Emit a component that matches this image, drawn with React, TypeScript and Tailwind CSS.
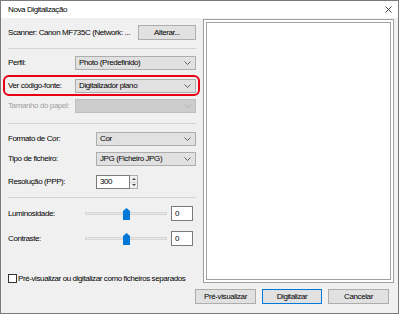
import React from 'react';

const font = "font-['Liberation_Sans',Arial,sans-serif] tracking-[-0.4px]";

const Chevron: React.FC<{ disabled?: boolean }> = ({ disabled }) => (
  <svg width="7" height="4" viewBox="0 0 7 4" className="shrink-0">
    <path d="M0.5 0.5 L3.5 3.5 L6.5 0.5" fill="none" stroke={disabled ? '#b5b5b5' : '#606060'} strokeWidth="1" />
  </svg>
);

const Select: React.FC<{ value?: string; disabled?: boolean; className?: string }> = ({ value, disabled, className }) => (
  <div
    className={`h-[14px] shrink-0 flex items-center justify-between pl-[3px] pr-[4px] border ${
      disabled ? 'bg-[#cccccc] border-[#bfbfbf]' : 'bg-[#e1e1e1] border-[#adadad]'
    } ${className ?? ''}`}
  >
    <span className="text-[8px] leading-none text-black">{value}</span>
    <Chevron disabled={disabled} />
  </div>
);

const Label: React.FC<{ children: React.ReactNode; disabled?: boolean; className?: string }> = ({ children, disabled, className }) => (
  <span className={`text-[8px] leading-none whitespace-nowrap ${disabled ? 'text-[#a0a0a0]' : 'text-black'} ${className ?? ''}`}>{children}</span>
);

const Separator: React.FC<{ className?: string }> = ({ className }) => (
  <div className={`h-px bg-[#d4d4d4] ${className ?? ''}`} />
);

const Slider: React.FC = () => (
  <div className="relative w-[82px] h-[14px] flex items-center shrink-0">
    <div className="w-full h-[3px] bg-[#e7e7e7] border border-[#d6d6d6]" />
    <svg width="7" height="12" viewBox="0 0 7 12" className="absolute left-[38px] top-[1px]">
      <path d="M0 3 L3.5 0 L7 3 L7 12 L0 12 Z" fill="#0078d7" />
    </svg>
  </div>
);

const Button: React.FC<{ children: React.ReactNode; focused?: boolean; className?: string }> = ({ children, focused, className }) => (
  <div
    className={`h-[15px] shrink-0 flex items-center justify-center bg-[#e1e1e1] border ${
      focused ? 'border-[#0078d7]' : 'border-[#adadad]'
    } ${className ?? ''}`}
  >
    <span className="text-[8px] leading-none text-black">{children}</span>
  </div>
);

export default function App() {
  return (
    <div className={`w-[399px] h-[314px] bg-[#f0f0f0] border border-[#7a7a7a] flex flex-col ${font}`}>
      {/* Title bar */}
      <div className="h-[17px] bg-white flex items-center justify-between pl-[7px] pr-[6px] shrink-0">
        <span className="text-[8px] leading-none text-black">Nova Digitalização</span>
        <svg width="7" height="7" viewBox="0 0 7 7">
          <path d="M0.5 0.5 L6.5 6.5 M6.5 0.5 L0.5 6.5" stroke="#333" strokeWidth="0.9" />
        </svg>
      </div>

      <div className="flex flex-1">
        {/* Left panel */}
        <div className="w-[195px] pl-[7px] flex flex-col shrink-0">
          <div className="mt-[7px] h-[15px] flex items-center justify-between">
            <Label>Scanner: Canon MF735C (Network: ...</Label>
            <Button className="w-[58px]">Alterar...</Button>
          </div>
          <Separator className="mt-[8px]" />

          <div className="mt-[7px] h-[14px] flex items-center justify-between">
            <Label>Perfil:</Label>
            <Select value="Photo (Predefinido)" className="w-[121px]" />
          </div>

          <div className="mt-[5px] -ml-[5px] -mr-[4px] pl-[5px] pr-[4px] h-[21px] border-2 border-[#e60012] rounded-[6px] flex items-center justify-between">
            <Label className="-ml-[2px]">Ver código-fonte:</Label>
            <Select value="Digitalizador plano" className="w-[121px] -mr-[2px]" />
          </div>

          <div className="mt-[3px] h-[14px] flex items-center justify-between">
            <Label disabled>Tamanho do papel:</Label>
            <Select disabled className="w-[121px]" />
          </div>
          <Separator className="mt-[10px]" />

          <div className="mt-[8px] h-[14px] flex items-center justify-between">
            <Label>Formato de Cor:</Label>
            <Select value="Cor" className="w-[100px]" />
          </div>
          <div className="mt-[6px] h-[14px] flex items-center justify-between">
            <Label>Tipo de ficheiro:</Label>
            <Select value="JPG (Ficheiro JPG)" className="w-[100px]" />
          </div>
          <div className="mt-[9px] h-[14px] flex items-center">
            <Label className="w-[88px]">Resolução (PPP):</Label>
            <div className="h-[14px] w-[34px] bg-white border border-[#7a7a7a] flex items-center pl-[3px]">
              <span className="text-[8px] leading-none text-black">300</span>
            </div>
            <div className="h-[14px] w-[8px] border border-l-0 border-[#adadad] bg-[#f0f0f0] flex flex-col">
              <div className="flex-1 flex items-center justify-center border-b border-[#d0d0d0]">
                <svg width="4" height="2" viewBox="0 0 4 2"><path d="M0 2 L2 0 L4 2 Z" fill="#444" /></svg>
              </div>
              <div className="flex-1 flex items-center justify-center">
                <svg width="4" height="2" viewBox="0 0 4 2"><path d="M0 0 L2 2 L4 0 Z" fill="#444" /></svg>
              </div>
            </div>
          </div>
          <Separator className="mt-[8px]" />

          <div className="mt-[8px] h-[15px] flex items-center">
            <Label className="w-[77px]">Luminosidade:</Label>
            <Slider />
            <div className="ml-[4px] h-[15px] w-[22px] bg-white border border-[#7a7a7a] flex items-center pl-[3px]">
              <span className="text-[8px] leading-none text-black">0</span>
            </div>
          </div>
          <div className="mt-[10px] h-[15px] flex items-center">
            <Label className="w-[77px]">Contraste:</Label>
            <Slider />
            <div className="ml-[4px] h-[15px] w-[22px] bg-white border border-[#7a7a7a] flex items-center pl-[3px]">
              <span className="text-[8px] leading-none text-black">0</span>
            </div>
          </div>

          <div className="mt-[28px] flex items-center gap-[1px]">
            <div className="w-[9px] h-[9px] shrink-0 bg-white border border-[#333]" />
            <Label>Pré-visualizar ou digitalizar como ficheiros separados</Label>
          </div>
        </div>

        {/* Preview */}
        <div className="flex-1 flex flex-col pl-[7px] pr-[4px]">
          <div className="mt-[1px] h-[264px] border border-[#a0a0a0] bg-white p-[2px]">
            <div className="w-full h-full border border-[#a0a0a0] bg-white" />
          </div>
        </div>
      </div>

      <div className="h-[32px] flex items-start justify-end pr-[9px] -mt-[30px]">
        <div className="mt-[8px] flex gap-[6px]">
          <Button className="w-[61px]">Pré-visualizar</Button>
          <Button focused className="w-[60px]">Digitalizar</Button>
          <Button className="w-[61px]">Cancelar</Button>
        </div>
      </div>
    </div>
  );
}
